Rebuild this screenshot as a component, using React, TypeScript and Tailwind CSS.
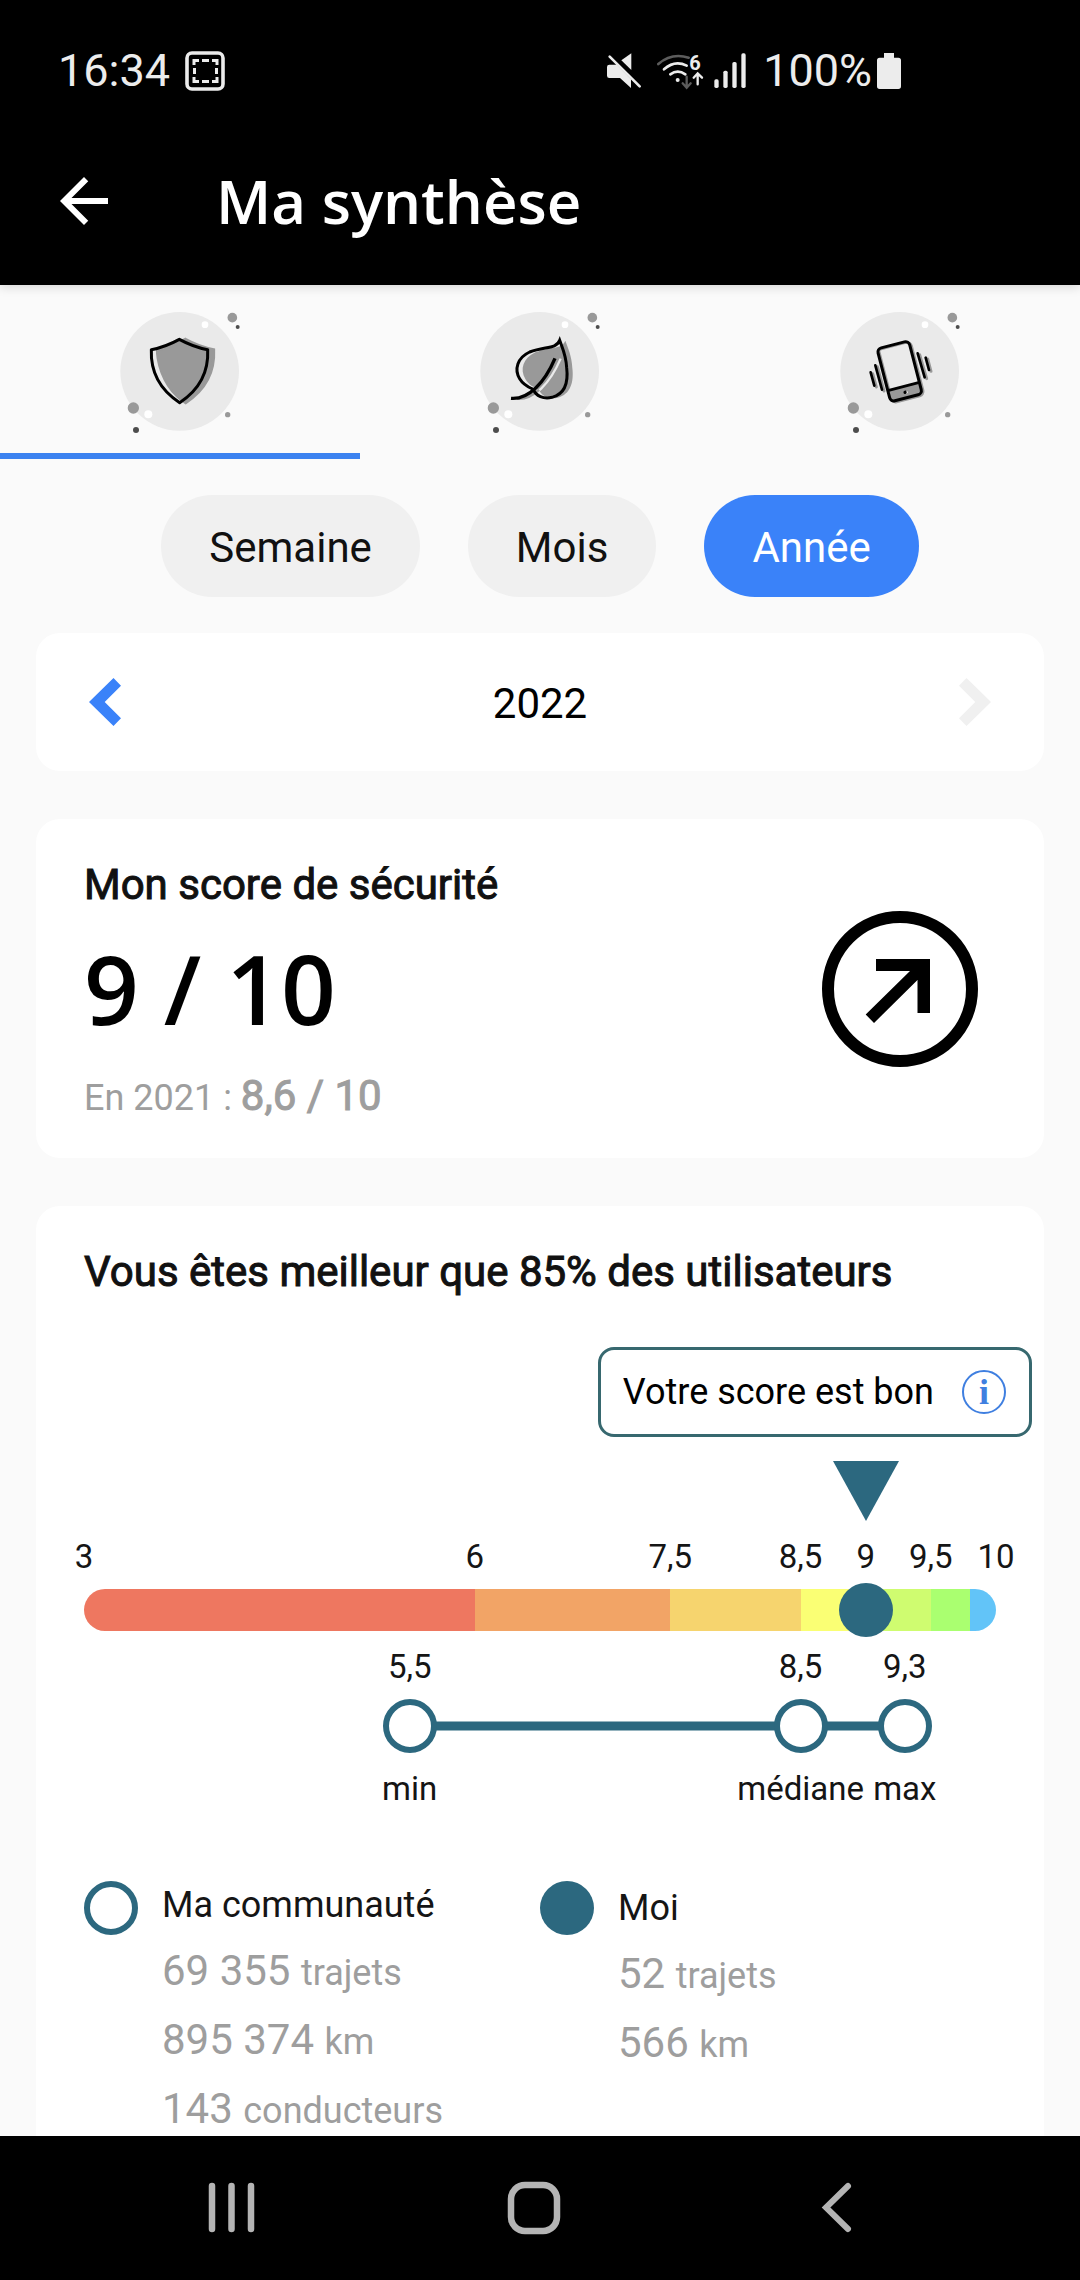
import { useState } from "react";
import type { ReactNode } from "react";

const MIN_SCORE = 3;
const MAX_SCORE = 10;

const periods = ["Semaine", "Mois", "Année"];

const segments = [
  { from: 3, to: 6, color: "bg-[#ee7760]" },
  { from: 6, to: 7.5, color: "bg-[#f2a466]" },
  { from: 7.5, to: 8.5, color: "bg-[#f6d46e]" },
  { from: 8.5, to: 9, color: "bg-[#faff74]" },
  { from: 9, to: 9.5, color: "bg-[#cffc70]" },
  { from: 9.5, to: 9.8, color: "bg-[#aaff70]" },
  { from: 9.8, to: 10, color: "bg-[#62c4f8]" },
];

const ticks = [3, 6, 7.5, 8.5, 9, 9.5, 10];

const community = [
  { score: 5.5, label: "min" },
  { score: 8.5, label: "médiane" },
  { score: 9.3, label: "max" },
];

const myScore = 9;

const percent = (score: number) => `${((score - MIN_SCORE) / (MAX_SCORE - MIN_SCORE)) * 100}%`;
const format = (score: number) => String(score).replace(".", ",");

function StatusBar() {
  return (
    <div className="flex h-[117px] items-center pt-[25px] pr-[178px] pl-[58px] text-[45px] text-[#ececec]">
      <span>16:34</span>
      <svg className="ml-[15px] h-10 w-10" viewBox="0 0 40 40" fill="none" stroke="#ececec">
        <rect x="2" y="2" width="36" height="36" rx="5" strokeWidth="3.6" />
        <path
          d="M9 14V9.500H14M17 9.500H24M27 9.500H32V14M31.500 17V23M32 26V30.500H27M24 30.500H17M14 30.500H9V26M9.500 23V17"
          strokeWidth="3"
        />
      </svg>

      <svg className="ml-auto h-[38px] w-9" viewBox="78 96 108 114" fill="#ececec">
        <path d="M88 134h22l43 44v26l-33-30H88q-7 0-7-7v-26q0-7 7-7z" />
        <path d="M124 121l30-21v50z" />
        <path d="M93 106L183 195" stroke="#000" strokeWidth="8" />
        <path d="M89 110L179 199" stroke="#ececec" strokeWidth="8" strokeLinecap="round" />
      </svg>
      <svg className="ml-3.5 h-[38px] w-12" viewBox="228 96 144 114" fill="none" strokeLinecap="round">
        <path d="M235 132Q275 97 326 113" stroke="#5c5c5c" strokeWidth="8" />
        <path d="M252 148Q284 119 320 137" stroke="#ececec" strokeWidth="8" />
        <path d="M271 163Q293 147 316 163" stroke="#ececec" strokeWidth="8" />
        <circle cx="293" cy="180" r="6" fill="#ececec" />
        <path d="M320 170V202M308 190L320 203L332 190" stroke="#5c5c5c" strokeWidth="7" />
        <path d="M353 193V161M341 173L353 160L366 173" stroke="#ececec" strokeWidth="7" />
        <text x="328" y="149" fontSize="60" fontWeight="700" fill="#ececec">
          6
        </text>
      </svg>
      <svg className="ml-[9px] h-[38px] w-[34px]" viewBox="399 96 102 114" fill="#ececec">
        <rect x="403" y="178" width="13" height="26" rx="5" />
        <rect x="430" y="152" width="13" height="52" rx="5" />
        <rect x="457" y="126" width="13" height="78" rx="5" />
        <rect x="484" y="100" width="13" height="104" rx="5" />
      </svg>
      <span className="mr-1 ml-4">100%</span>
      <svg className="h-[38px] w-[26px]" viewBox="888 96 78 114" fill="#ececec">
        <path d="M912 99h30v14h13q8 0 8 8v78q0 8-8 8h-56q-8 0-8-8v-78q0-8 8-8h13z" />
      </svg>
    </div>
  );
}

function TabBadge({ children }: { children: ReactNode }) {
  return (
    <svg className="h-[130px] w-[130px]" viewBox="75 51 390 390" fill="none">
      <circle cx="269" cy="244" r="178" fill="#eaeaea" />
      <circle cx="345" cy="104" r="10" fill="#fff" />
      <circle cx="175" cy="373" r="12" fill="#fff" />
      <circle cx="427" cy="83" r="14.500" fill="#999" />
      <circle cx="443" cy="111" r="6" fill="#4d4d4d" />
      <circle cx="130" cy="354" r="17" fill="#999" />
      <circle cx="138" cy="420" r="9" fill="#4d4d4d" />
      <circle cx="413" cy="374" r="8" fill="#999" />
      {children}
    </svg>
  );
}

function ShieldIcon() {
  const shape = "M268 148Q310 171 353 179Q358 280 269 338Q180 280 184 179Q226 171 268 148Z";
  return (
    <TabBadge>
      <path d={shape} fill="#999" stroke="#999" strokeWidth="9" transform="translate(18 0)" />
      <path d="M184 183Q183 280 262 333L276 338Q205 280 197 183Z" fill="#eaeaea" />
      <path d={shape} stroke="#000" strokeWidth="9" strokeLinejoin="round" />
    </TabBadge>
  );
}

function LeafIcon() {
  const leaf =
    "M329 151C318 178 285 168 239 186C202 203 192 238 209 266C220 285 237 292 250 298C258 318 280 328 306 322C345 312 355 275 350 233C348 195 337 174 329 151Z";
  return (
    <TabBadge>
      <g transform="translate(17 1)">
        <path d={leaf} fill="#999" />
        <path d="M184 325C235 329 283 280 315 205" stroke="#eaeaea" strokeWidth="7" />
        <path d="M184 325C211 328 231 315 250 298" stroke="#999" strokeWidth="8" />
      </g>
      <path d={leaf} stroke="#000" strokeWidth="9" />
      <path d="M183 325C235 329 283 280 315 205" stroke="#000" strokeWidth="10" />
    </TabBadge>
  );
}

function PhoneIcon() {
  const waves = "M182 247L193 287M196 226L216 299M323 190L344 262M347 203L357 240";
  return (
    <TabBadge>
      <path d={waves} stroke="#999" strokeWidth="9" strokeLinecap="round" transform="translate(6 4)" />
      <g transform="rotate(-14.500 269 244)">
        <rect x="224" y="166" width="98" height="164" rx="13" stroke="#999" strokeWidth="9" />
        <rect x="220" y="162" width="98" height="164" rx="13" fill="#eaeaea" />
        <path d="M220 291H318V314Q318 326 306 326H232Q220 326 220 314Z" fill="#999" />
        <path d="M225 291V171Q225 166 232 166H314" stroke="#999" strokeWidth="6" />
        <rect x="220" y="162" width="98" height="164" rx="13" stroke="#000" strokeWidth="9" />
        <path d="M220 291H318" stroke="#000" strokeWidth="8" />
        <circle cx="273" cy="310" r="4" fill="#fff" />
        <circle cx="269" cy="309" r="5" fill="#000" />
      </g>
      <path d={waves} stroke="#000" strokeWidth="8" strokeLinecap="round" />
    </TabBadge>
  );
}

const tabs = [
  { name: "Sécurité", icon: <ShieldIcon /> },
  { name: "Éco-conduite", icon: <LeafIcon /> },
  { name: "Téléphone", icon: <PhoneIcon /> },
];

function Chevron({ className }: { className: string }) {
  return (
    <svg className={className} viewBox="0 0 32 48" fill="currentColor">
      <path d="M24.500 0L32 7.700L15.700 24L32 40.300L24.500 48L0 24Z" />
    </svg>
  );
}

function CardTitle({ children }: { children: ReactNode }) {
  return <h2 className="text-[42px] leading-[48px] text-[#111] [-webkit-text-stroke:1px]">{children}</h2>;
}

function ScoreScale() {
  return (
    <div className="mx-12 text-[33px] leading-9 text-[#151515]">
      <div className="relative mt-6 h-[60px]">
        <svg
          className="absolute h-[60px] w-[66px] -translate-x-1/2"
          style={{ left: percent(myScore) }}
          viewBox="0 0 66 60"
        >
          <path d="M0 0H66L33 60Z" fill="#2c687f" />
        </svg>
      </div>

      <div className="relative mt-[18px] h-9">
        {ticks.map((tick) => (
          <span key={tick} className="absolute -translate-x-1/2" style={{ left: percent(tick) }}>
            {format(tick)}
          </span>
        ))}
      </div>

      <div className="relative mt-3.5">
        <div className="flex h-[42px] overflow-hidden rounded-full">
          {segments.map((segment) => (
            <div key={segment.from} className={segment.color} style={{ flexGrow: segment.to - segment.from }} />
          ))}
        </div>
        <div
          className="absolute top-1/2 h-[54px] w-[54px] -translate-1/2 rounded-full bg-[#2c687f]"
          style={{ left: percent(myScore) }}
        />
      </div>

      <div className="relative mt-[18px] h-9">
        {community.map((point) => (
          <span key={point.label} className="absolute -translate-x-1/2" style={{ left: percent(point.score) }}>
            {format(point.score)}
          </span>
        ))}
      </div>

      <div className="relative mt-3.5 h-[54px]">
        <div
          className="absolute top-1/2 h-[9px] -translate-y-1/2 bg-[#2c687f]"
          style={{ left: percent(5.5), width: `${((9.3 - 5.5) / (MAX_SCORE - MIN_SCORE)) * 100}%` }}
        />
        {community.map((point) => (
          <div
            key={point.label}
            className="absolute h-[54px] w-[54px] -translate-x-1/2 rounded-full border-6 border-[#2c687f] bg-white"
            style={{ left: percent(point.score) }}
          />
        ))}
      </div>

      <div className="relative mt-[18px] h-9">
        {community.map((point) => (
          <span key={point.label} className="absolute -translate-x-1/2" style={{ left: percent(point.score) }}>
            {point.label}
          </span>
        ))}
      </div>
    </div>
  );
}

function Stat({ value, unit }: { value: string; unit: string }) {
  return (
    <p className="text-[42px] leading-[48px] text-[#9e9e9e]">
      {value} <span className="text-4xl leading-none">{unit}</span>
    </p>
  );
}

export default function App() {
  const [tab, setTab] = useState(0);
  const [period, setPeriod] = useState("Année");

  return (
    <div className="flex min-h-screen flex-col bg-[#fafafa] font-[Roboto,sans-serif]">
      <header className="bg-black shadow-[0_2px_10px_rgba(0,0,0,0.15)]">
        <StatusBar />
        <div className="flex h-[168px] items-center gap-24 pl-12 text-white">
          <button type="button" aria-label="Retour">
            <svg className="h-[72px] w-[72px]" viewBox="0 0 24 24" fill="currentColor">
              <path d="M20 11H7.830l5.590-5.590L12 4l-8 8 8 8 1.410-1.410L7.830 13H20v-2z" />
            </svg>
          </button>
          <h1 className="font-['Open_Sans',sans-serif] text-6xl font-semibold">Ma synthèse</h1>
        </div>
      </header>

      <nav className="grid grid-cols-3">
        {tabs.map((item, index) => (
          <button
            key={item.name}
            type="button"
            aria-label={item.name}
            onClick={() => setTab(index)}
            className={`flex justify-center border-b-6 pt-[22px] pb-4 ${
              index === tab ? "border-[#3b82f0]" : "border-transparent"
            }`}
          >
            {item.icon}
          </button>
        ))}
      </nav>

      <main className="flex flex-1 flex-col px-9">
        <div className="mt-9 flex justify-center gap-12">
          {periods.map((name) => (
            <button
              key={name}
              type="button"
              onClick={() => setPeriod(name)}
              className={`h-[102px] rounded-full px-12 pt-0.5 text-[42px] ${
                name === period ? "bg-[#3a82f9] text-white" : "bg-[#f0f0f0] text-[#111]"
              }`}
            >
              {name}
            </button>
          ))}
        </div>

        <section className="mt-9 flex h-[138px] items-center justify-between rounded-3xl bg-white px-[53px] text-[42px]">
          <button type="button" aria-label="Année précédente" className="text-[#3a82f9]">
            <Chevron className="h-12 w-8" />
          </button>
          <span className="pt-0.5">2022</span>
          <button type="button" aria-label="Année suivante" disabled className="text-[#f0f0f0]">
            <Chevron className="h-12 w-8 rotate-180" />
          </button>
        </section>

        <section className="mt-12 flex items-center justify-between rounded-3xl bg-white pr-[66px] pl-12">
          <div className="pt-[42px] pb-[38px]">
            <CardTitle>Mon score de sécurité</CardTitle>
            <p className="mt-[31px] font-['Open_Sans',sans-serif] text-8xl leading-[96px] font-semibold">9 / 10</p>
            <p className="mt-9 text-[42px] leading-[48px] text-[#9e9e9e]">
              <span className="text-4xl leading-none">En 2021 : </span>
              <span className="[-webkit-text-stroke:1px]">8,6 / 10</span>
            </p>
          </div>
          <svg className="h-[156px] w-[156px]" viewBox="0 0 156 156">
            <circle cx="78" cy="78" r="72" fill="none" stroke="#000" strokeWidth="12" />
            <path d="M54 48H108V102H95.500V69L52 112L43.700 103.500L88 60H54Z" />
          </svg>
        </section>

        <section className="mt-12 flex-1 rounded-t-3xl bg-white pt-[42px]">
          <div className="px-12">
            <CardTitle>Vous êtes meilleur que 85% des utilisateurs</CardTitle>
          </div>

          <div className="mt-[51px] flex justify-end pr-3">
            <div className="flex h-[90px] items-center gap-7 rounded-2xl border-3 border-[#37686f] pr-[23px] pl-[22px] text-4xl">
              <span>Votre score est bon</span>
              <button
                type="button"
                aria-label="Informations"
                className="flex h-11 w-11 items-center justify-center rounded-full border-2 border-[#3f7fe0] font-['Liberation_Serif',serif] text-4xl leading-9 font-bold text-[#3f7fe0]"
              >
                i
              </button>
            </div>
          </div>

          <ScoreScale />

          <div className="mt-[74px] grid grid-cols-2 px-12">
            <div className="flex gap-6">
              <div className="h-[54px] w-[54px] rounded-full border-6 border-[#2c687f]" />
              <div className="flex flex-col gap-[21px] pt-[3px]">
                <h3 className="text-4xl leading-[42px] text-[#151515]">Ma communauté</h3>
                <Stat value="69 355" unit="trajets" />
                <Stat value="895 374" unit="km" />
                <Stat value="143" unit="conducteurs" />
              </div>
            </div>
            <div className="flex gap-6">
              <div className="h-[54px] w-[54px] rounded-full bg-[#2c687f]" />
              <div className="flex flex-col gap-[21px] pt-1.5">
                <h3 className="text-4xl leading-[42px] text-[#151515]">Moi</h3>
                <Stat value="52" unit="trajets" />
                <Stat value="566" unit="km" />
              </div>
            </div>
          </div>
        </section>
      </main>

      <footer className="grid h-36 grid-cols-3 items-center justify-items-center bg-black pr-23 pl-20 text-[#b4b4b4]">
        <button type="button" aria-label="Applications récentes">
          <svg className="h-[54px] w-12" viewBox="0 0 48 54" stroke="currentColor" strokeWidth="6.500" strokeLinecap="round">
            <path d="M5 5V48M24.500 5V48M44 5V48" />
          </svg>
        </button>
        <button type="button" aria-label="Accueil">
          <svg className="h-[54px] w-[54px]" viewBox="0 0 54 54" fill="none" stroke="currentColor" strokeWidth="6.500">
            <rect x="4" y="4" width="46" height="46" rx="14" />
          </svg>
        </button>
        <button type="button" aria-label="Précédent">
          <svg className="h-[54px] w-8" viewBox="0 0 32 54" fill="none" stroke="currentColor" strokeWidth="6" strokeLinecap="round">
            <path d="M27 5L5 26.500L27 48" />
          </svg>
        </button>
      </footer>
    </div>
  );
}
